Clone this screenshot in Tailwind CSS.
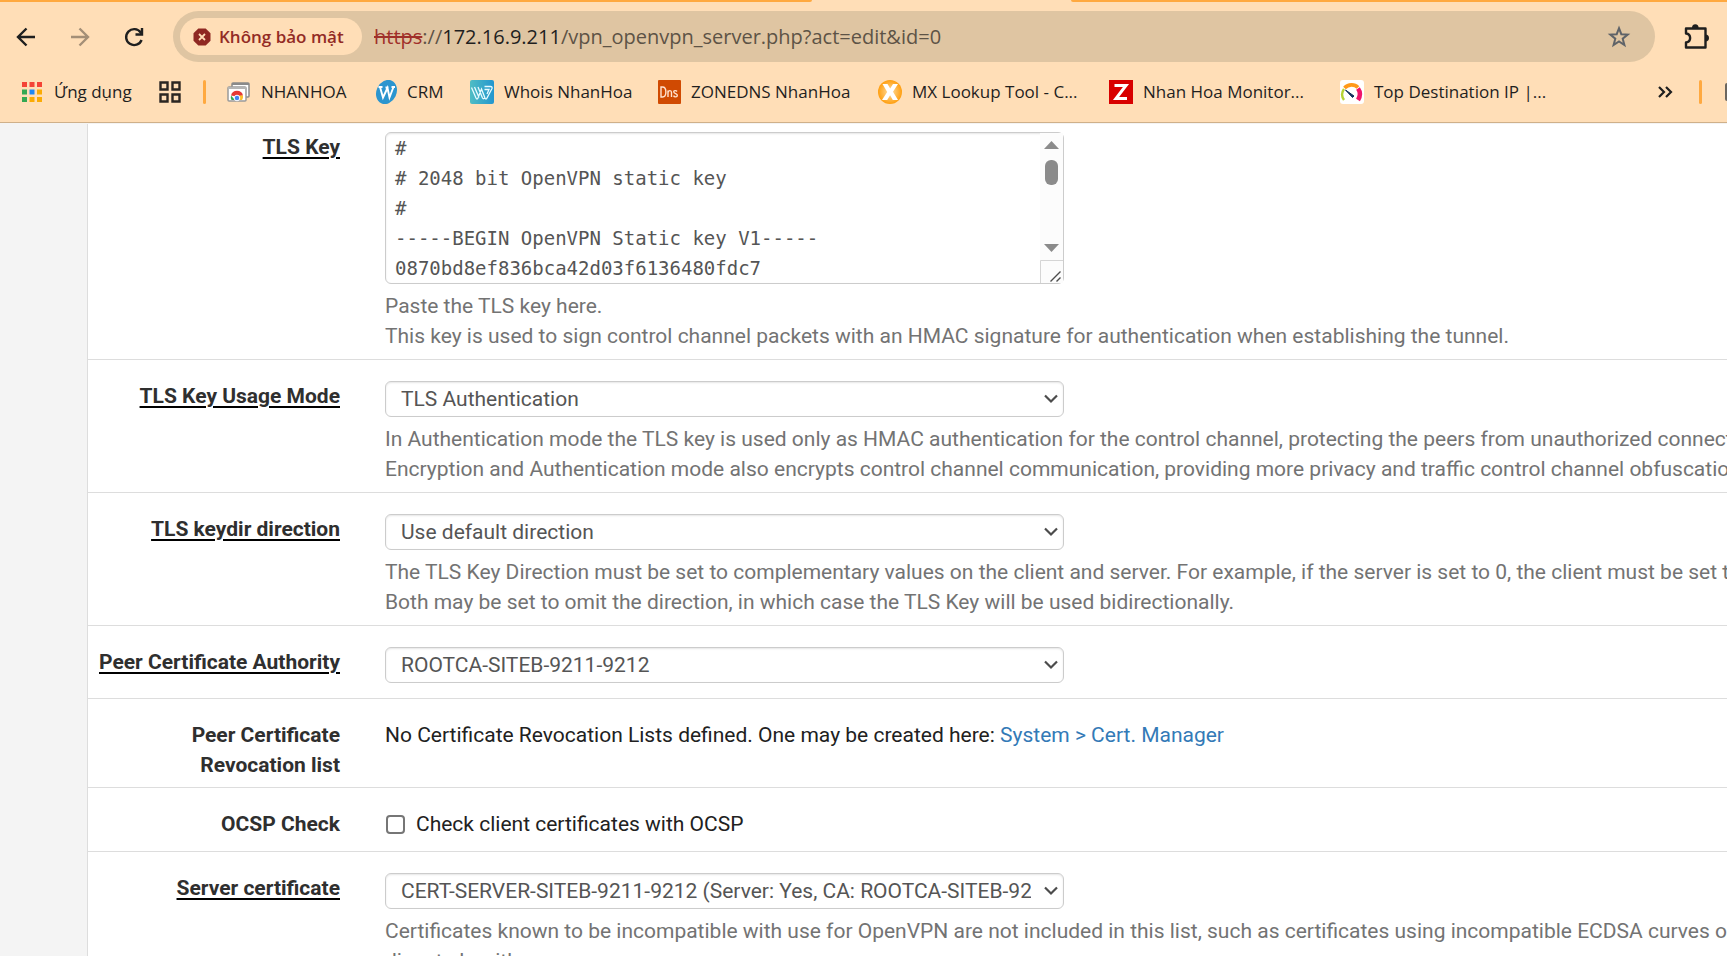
<!DOCTYPE html>
<html lang="vi">
<head>
<meta charset="utf-8">
<meta name="viewport" content="width=device-width, initial-scale=1">
<title>OpenVPN Server</title>
<script src="https://cdn.jsdelivr.net/npm/@tailwindcss/browser@4"></script>
</head>
<body class="flex h-screen flex-col overflow-hidden bg-[#f4f4f4] font-['Roboto',sans-serif] text-[21px] leading-[30px] text-[#212121]">

<header class="shrink-0 border-b border-[#cfb08a] bg-[#ffdeb7] font-['Open_Sans','Noto_Sans',sans-serif] text-[#1f1f1f]">
  <!-- tab strip edge -->
  <div class="flex h-[2px] justify-between bg-[#ffdeb7]">
    <div class="w-[47%] rounded-br-sm bg-[#ffa940]"></div>
    <div class="w-[38%] rounded-bl-sm bg-[#ffa940]"></div>
  </div>

  <nav class="flex h-[69px] items-center" aria-label="Toolbar">
    <div class="flex w-[173px] shrink-0 items-center gap-[30px] pl-[14px]">
      <button aria-label="Back" class="size-6"><svg viewBox="0 0 24 24" class="size-6" fill="none" stroke="#1f1f1f" stroke-width="2.4"><path d="M21 12H4.500M12.500 3.500 4 12l8.500 8.500"/></svg></button>
      <button aria-label="Forward" class="size-6"><svg viewBox="0 0 24 24" class="size-6" fill="none" stroke="#a48f77" stroke-width="2.400"><path d="M3 12h16.500M11.500 3.500 20 12l-8.500 8.500"/></svg></button>
      <button aria-label="Reload" class="size-6"><svg viewBox="0 0 24 24" class="size-6" fill="none" stroke="#1f1f1f" stroke-width="2.400"><path d="M19.600 15A8 8 0 1 1 18.700 7.500L20 9"/><path d="M20 3v6.500h-6.500"/></svg></button>
    </div>
    <div class="flex h-[51px] min-w-0 flex-1 items-center rounded-full bg-[#dfc5a2] pl-[7px] pr-[24px]">
      <button class="flex h-[37px] w-[182px] shrink-0 items-center gap-2 rounded-full bg-[#ffdeb7] pl-[13px] text-[17px] font-semibold text-[#932b25]">
        <svg viewBox="0 0 18 18" class="size-[18px] shrink-0"><path fill="#8f2822" d="M5.300.500h7.400l4.800 4.800v7.400l-4.800 4.800H5.300L.500 12.700V5.300z"/><path d="m6 6 6 6m0-6-6 6" stroke="#ffdeb7" stroke-width="1.800"/></svg>
        <span class="whitespace-nowrap">Không bảo mật</span>
      </button>
      <div class="ml-3 min-w-0 flex-1 whitespace-nowrap text-[20px] text-[#5d5346]"><span class="text-[#a0302a] line-through">https</span>://<span class="text-[#1f1f1f]">172.16.9.211</span>/vpn_openvpn_server.php?act=edit&amp;id=0</div>
      <button aria-label="Bookmark this page" class="size-6"><svg viewBox="0 0 24 24" class="size-6" fill="none" stroke="#5f6368" stroke-width="2"><path d="m12 3.200 2.300 6 6.400.400-5 4.100 1.700 6.300-5.400-3.500L6.600 20l1.700-6.300-5-4.100 6.400-.400z"/></svg></button>
    </div>
    <div class="flex w-[72px] shrink-0 pl-[28px]">
      <button aria-label="Extensions" class="size-[26px]"><svg viewBox="0 0 26 26" class="size-[26px]"><path fill="none" stroke="#1f1f1f" stroke-width="2.400" stroke-linejoin="round" d="M3 4.500h19.500v19H3v-5c5.500-.700 5.500-8.300 0-9z"/><path fill="#1f1f1f" d="M9 4a3 3.400 0 0 1 6.600 0zM22.500 10.500a3.300 3.300 0 0 1 0 7z"/></svg></button>
    </div>
  </nav>

  <nav class="flex h-[51px] items-center overflow-hidden whitespace-nowrap pb-[9px] text-[17px]" aria-label="Bookmarks">
    <a href="#" class="flex w-[159px] shrink-0 items-center gap-3 pl-[22px]">
      <svg viewBox="0 0 20 20" class="size-5 shrink-0"><path fill="#f44336" d="M0 0h5v5H0zM7.500 0h5v5h-5zM15 0h5v5h-5z"/><path fill="#34a853" d="M0 7.500h5v5H0zM0 15h5v5H0z"/><path fill="#1e88f5" d="M7.500 7.500h5v5h-5z"/><path fill="#fbab04" d="M15 7.500h5v5h-5zM7.500 15h5v5h-5zM15 15h5v5h-5z"/></svg>
      <span>Ứng dụng</span>
    </a>
    <button aria-label="Tab groups" class="mr-[22px] size-[22px] shrink-0"><svg viewBox="0 0 22 22" class="size-[22px]" fill="none" stroke="#2b2622" stroke-width="2.400"><path d="M1.500 1.500h7v7h-7zM13.500 1.500h7v7h-7zM1.500 13.500h7v7h-7zM13.500 13.500h7v7h-7z"/></svg></button>
    <div class="mr-[21px] h-6 w-[3px] shrink-0 rounded-full bg-[#ffa940]"></div>
    <a href="#" class="flex w-[148px] shrink-0 items-center gap-[10px]">
      <svg viewBox="0 0 24 24" class="size-6 shrink-0"><rect x="5" y="3" width="17" height="14" rx="1" fill="#fff" stroke="#8a8a8a" stroke-width="1.500"/><path d="M5 4h17" stroke="#8a8a8a" stroke-width="2"/><rect x="1" y="7" width="18" height="14" rx="1" fill="#fff" stroke="#9a9a9a" stroke-width="1.500"/><path d="M1 8h18" stroke="#b5b5b5" stroke-width="2"/><path fill="#e53935" d="M4 15.500a6.200 6.200 0 0 1 12 0l-6 1z"/><path fill="#34a853" d="M4 15.500 8 20H4.500a6 6 0 0 1-.500-4.500z"/><path fill="#fbc02d" d="M16 15.500a6 6 0 0 1-1 4.500h-4l1-4.500z"/><circle cx="10" cy="18" r="2.800" fill="#4285f4" stroke="#fff"/></svg>
      <span>NHANHOA</span>
    </a>
    <a href="#" class="flex w-[95px] shrink-0 items-center gap-2">
      <svg viewBox="0 0 24 24" class="size-6 shrink-0"><ellipse cx="11.500" cy="12" rx="10" ry="12.500" transform="rotate(25 11.500 12)" fill="#2b95cf"/><path d="m5 7 3 10.500L12.500 8l2 9.500L18.500 7M3.500 7h4M10.500 7.500h3M16.500 7H20" fill="none" stroke="#fff" stroke-width="1.900"/></svg>
      <span>CRM</span>
    </a>
    <a href="#" class="flex w-[188px] shrink-0 items-center gap-[10px]">
      <svg viewBox="0 0 24 24" class="size-6 shrink-0"><defs><linearGradient id="whois"><stop stop-color="#4fbdc4"/><stop offset="1" stop-color="#2496cf"/></linearGradient></defs><rect width="24" height="24" rx="2" fill="url(#whois)"/><path d="M1.500 7.500 6 18q1 2 2 0l3.500-9 3.500 9q1 2 2 0l5-9.500q.500-2-1.500-2h-6M4.500 7 9 17.500M8 7l4.500 11q1 1.500 2 0M17 14l2-4.500h-4.500" fill="none" stroke="#e8fbff" stroke-width="1.300"/></svg>
      <span>Whois NhanHoa</span>
    </a>
    <a href="#" class="flex w-[220px] shrink-0 items-center gap-[10px]">
      <svg viewBox="0 0 23 24" class="h-6 w-[23px] shrink-0"><rect width="23" height="24" rx="1" fill="#d04a02"/><path d="M3 7v10h1.500c4.500 0 4.500-10 0-10zM10 17v-6.500M10 12.500c.500-2.500 3.500-2.500 3.500 0V17M19 11.500c-1-1.500-3.500-1-3.200.500.300 1.800 3.500 1.400 3.500 3.200 0 2-2.800 2.200-3.800.500" fill="none" stroke="#ffe3d1" stroke-width="1.400"/></svg>
      <span>ZONEDNS NhanHoa</span>
    </a>
    <a href="#" class="flex w-[231px] shrink-0 items-center gap-[10px]">
      <svg viewBox="0 0 24 24" class="size-6 shrink-0"><defs><radialGradient id="mx"><stop stop-color="#ffe0a8"/><stop offset="1" stop-color="#ff9f10"/></radialGradient></defs><circle cx="12" cy="12" r="12" fill="url(#mx)"/><path fill="#fff" d="M4.500 4h5l2.700 4.500L15 4h5l-5 7.800 5 8.200h-5.200l-2.700-4.800L9.200 20H4l5.200-8z"/></svg>
      <span>MX Lookup Tool - C...</span>
    </a>
    <a href="#" class="flex w-[231px] shrink-0 items-center gap-[10px]">
      <svg viewBox="0 0 24 24" class="size-6 shrink-0"><path fill="#d80000" d="M0 0h24v24H0z"/><path d="M5.500 5.500h11.500L7 18.500h11" fill="none" stroke="#fff" stroke-width="3"/></svg>
      <span>Nhan Hoa Monitor...</span>
    </a>
    <a href="#" class="flex min-w-0 flex-1 items-center gap-[10px]">
      <svg viewBox="0 0 24 24" class="size-6 shrink-0"><rect width="24" height="24" rx="3" fill="#fff"/><path d="M4 20a9.500 9.500 0 0 1 0-11" fill="none" stroke="#b5d334" stroke-width="2.400"/><path d="M4.500 8c4-4 10-4 13.500-.500" fill="none" stroke="#ff9a1a" stroke-width="3.800"/><path d="M18 8.500c2.500 3.500 2.500 7.500 0 11.500" fill="none" stroke="#f0146a" stroke-width="4.500"/><path d="m5.500 10 8.500 6-1.500 1.500z" fill="#12305c" stroke="#12305c"/></svg>
      <span>Top Destination IP |...</span>
    </a>
    <button aria-label="More bookmarks" class="mr-[25px] size-[18px] shrink-0"><svg viewBox="0 0 18 18" class="size-[18px]" fill="none" stroke="#1f1f1f" stroke-width="2.200"><path d="m3 4 5 5-5 5M10 4l5 5-5 5"/></svg></button>
    <div class="mr-[23px] h-6 w-[3px] shrink-0 rounded-full bg-[#ffa940]"></div>
    <div class="h-[18px] w-[2px] shrink-0 rounded-l-sm bg-[#6b665f]"></div>
  </nav>
</header>

<main class="ml-[87px] mt-px min-h-0 flex-1 overflow-hidden whitespace-nowrap border-l border-[#ddd] bg-white">
  <form class="divide-y divide-[#ddd]">
    <div class="flex gap-[45px] pb-2 pt-2">
      <label for="tls" class="w-[252px] shrink-0 text-right font-bold text-[#2f2f2f] underline decoration-black decoration-2 underline-offset-3">TLS Key</label>
      <div>
        <div class="relative h-[152px] w-[679px]">
          <textarea id="tls" spellcheck="false" class="block size-full resize-none overflow-hidden rounded-[6px] border border-[#ccc] bg-white pl-[9px] pr-8 font-['DejaVu_Sans_Mono',monospace] text-[19px] leading-[30px] text-[#555] shadow-[inset_0_1px_2px_rgba(0,0,0,0.1)] outline-none">#
# 2048 bit OpenVPN static key
#
-----BEGIN OpenVPN Static key V1-----
0870bd8ef836bca42d03f6136480fdc7</textarea>
          <svg viewBox="0 0 23 150" class="absolute right-px top-px h-[150px] w-[23px]" aria-hidden="true"><path fill="#fcfcfc" d="M0 0h23v150H0z"/><path fill="#8b8b8b" d="m11.500 8 7.500 8H4zM11.500 119l7.500-8H4z"/><rect x="5" y="27" width="13" height="25" rx="6" fill="#8b8b8b"/><path d="M.500 150v-22.500H23" fill="none" stroke="#d5d5d5"/><path d="m10.500 148.500 10-10M16.500 148.500l4-4" stroke="#4c4c4c" stroke-width="1.400"/></svg>
        </div>
        <p class="mt-[7px] text-[#737373]">Paste the TLS key here.<br>This key is used to sign control channel packets with an HMAC signature for authentication when establishing the tunnel.</p>
      </div>
    </div>

    <div class="flex gap-[45px] pb-2 pt-[21px]">
      <label for="mode" class="w-[252px] shrink-0 text-right font-bold text-[#2f2f2f] underline decoration-black decoration-2 underline-offset-3">TLS Key Usage Mode</label>
      <div>
        <div class="relative w-[679px]">
          <select id="mode" class="block h-9 w-full appearance-none rounded-[6px] border border-[#ccc] bg-white pl-[15px] pr-8 text-[#555] shadow-[inset_0_1px_2px_rgba(0,0,0,0.1)]"><option>TLS Authentication</option></select>
          <svg viewBox="0 0 14 10" class="pointer-events-none absolute right-[6px] top-[13px] h-[10px] w-[14px]" fill="none" stroke="#4c4c4c" stroke-width="2.200"><path d="m1 1.500 6 6 6-6"/></svg>
        </div>
        <p class="mt-[7px] text-[#737373]">In Authentication mode the TLS key is used only as HMAC authentication for the control channel, protecting the peers from unauthorized connections.<br>Encryption and Authentication mode also encrypts control channel communication, providing more privacy and traffic control channel obfuscation.</p>
      </div>
    </div>

    <div class="flex gap-[45px] pb-2 pt-[21px]">
      <label for="keydir" class="w-[252px] shrink-0 text-right font-bold text-[#2f2f2f] underline decoration-black decoration-2 underline-offset-3">TLS keydir direction</label>
      <div>
        <div class="relative w-[679px]">
          <select id="keydir" class="block h-9 w-full appearance-none rounded-[6px] border border-[#ccc] bg-white pl-[15px] pr-8 text-[#555] shadow-[inset_0_1px_2px_rgba(0,0,0,0.1)]"><option>Use default direction</option></select>
          <svg viewBox="0 0 14 10" class="pointer-events-none absolute right-[6px] top-[13px] h-[10px] w-[14px]" fill="none" stroke="#4c4c4c" stroke-width="2.200"><path d="m1 1.500 6 6 6-6"/></svg>
        </div>
        <p class="mt-[7px] text-[#737373]">The TLS Key Direction must be set to complementary values on the client and server. For example, if the server is set to 0, the client must be set to 1.<br>Both may be set to omit the direction, in which case the TLS Key will be used bidirectionally.</p>
      </div>
    </div>

    <div class="flex gap-[45px] pb-[15px] pt-[21px]">
      <label for="ca" class="w-[252px] shrink-0 text-right font-bold text-[#2f2f2f] underline decoration-black decoration-2 underline-offset-3">Peer Certificate Authority</label>
      <div class="relative w-[679px]">
        <select id="ca" class="block h-9 w-full appearance-none rounded-[6px] border border-[#ccc] bg-white pl-[15px] pr-8 text-[#555] shadow-[inset_0_1px_2px_rgba(0,0,0,0.1)]"><option>ROOTCA-SITEB-9211-9212</option></select>
        <svg viewBox="0 0 14 10" class="pointer-events-none absolute right-[6px] top-[13px] h-[10px] w-[14px]" fill="none" stroke="#4c4c4c" stroke-width="2.200"><path d="m1 1.500 6 6 6-6"/></svg>
      </div>
    </div>

    <div class="flex gap-[45px] pb-[7px] pt-[21px]">
      <div class="w-[252px] shrink-0 text-right font-bold text-[#2f2f2f]">Peer Certificate<br>Revocation list</div>
      <p>No Certificate Revocation Lists defined. One may be created here: <a href="#" class="text-[#337ab7]">System &gt; Cert. Manager</a></p>
    </div>

    <div class="flex gap-[45px] pb-3 pt-[21px]">
      <div class="w-[252px] shrink-0 text-right font-bold text-[#2f2f2f]">OCSP Check</div>
      <label class="flex items-center gap-[11px] pl-px"><input type="checkbox" class="size-[19px] appearance-none rounded-[4px] border-[2px] border-[#767676] bg-white">Check client certificates with OCSP</label>
    </div>

    <div class="flex gap-[45px] pb-2 pt-[21px]">
      <label for="cert" class="w-[252px] shrink-0 text-right font-bold text-[#2f2f2f] underline decoration-black decoration-2 underline-offset-3">Server certificate</label>
      <div>
        <div class="relative w-[679px]">
          <select id="cert" class="block h-9 w-full appearance-none rounded-[6px] border border-[#ccc] bg-white pl-[15px] pr-8 text-[#555] shadow-[inset_0_1px_2px_rgba(0,0,0,0.1)]"><option>CERT-SERVER-SITEB-9211-9212 (Server: Yes, CA: ROOTCA-SITEB-92</option></select>
          <svg viewBox="0 0 14 10" class="pointer-events-none absolute right-[6px] top-[13px] h-[10px] w-[14px]" fill="none" stroke="#4c4c4c" stroke-width="2.200"><path d="m1 1.500 6 6 6-6"/></svg>
        </div>
        <p class="mt-[7px] text-[#737373]">Certificates known to be incompatible with use for OpenVPN are not included in this list, such as certificates using incompatible ECDSA curves or weak<br>digest algorithms.</p>
      </div>
    </div>
  </form>
</main>
</body>
</html>
